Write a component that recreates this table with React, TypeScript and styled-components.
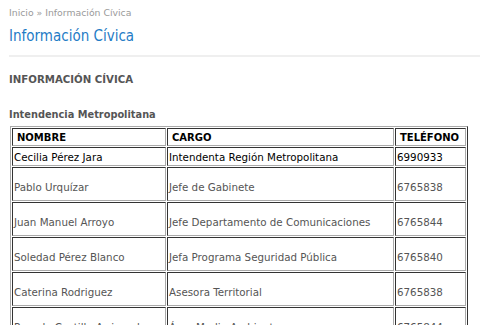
import styled, { createGlobalStyle } from "styled-components";

const GlobalStyle = createGlobalStyle`
  html, body {
    margin: 0;
    padding: 0;
    background: #fff;
    overflow: hidden;
  }
  body {
    font-family: "DejaVu Sans", Verdana, sans-serif;
  }
`;

type Person = { nombre: string; cargo: string; telefono: string };

const personas: Person[] = [
  { nombre: "Cecilia Pérez Jara", cargo: "Intendenta Región Metropolitana", telefono: "6990933" },
  { nombre: "Pablo Urquízar", cargo: "Jefe de Gabinete", telefono: "6765838" },
  { nombre: "Juan Manuel Arroyo", cargo: "Jefe Departamento de Comunicaciones", telefono: "6765844" },
  { nombre: "Soledad Pérez Blanco", cargo: "Jefa Programa Seguridad Pública", telefono: "6765840" },
  { nombre: "Caterina Rodriguez", cargo: "Asesora Territorial", telefono: "6765838" },
  { nombre: "Pamela Castillo Arriagada", cargo: "Área Medio Ambiente", telefono: "6765844" },
];

export default function App() {
  return (
    <>
      <GlobalStyle />
      <Page>
        <Breadcrumb>
          <a>Inicio</a> » Información Cívica
        </Breadcrumb>
        <Title>Información Cívica</Title>
        <Rule />
        <SectionTitle>INFORMACIÓN CÍVICA</SectionTitle>
        <SubTitle>Intendencia Metropolitana</SubTitle>
        <Table>
          <colgroup>
            <col style={{ width: 154 }} />
            <col style={{ width: 227 }} />
            <col style={{ width: 71 }} />
          </colgroup>
          <thead>
            <tr>
              <HeadCell>NOMBRE</HeadCell>
              <HeadCell>CARGO</HeadCell>
              <HeadCell>TELÉFONO</HeadCell>
            </tr>
          </thead>
          <tbody>
            {personas.map((p, i) => (
              <tr key={p.nombre}>
                <Cell $first={i === 0}>{p.nombre}</Cell>
                <Cell $first={i === 0}>{p.cargo}</Cell>
                <Cell $first={i === 0}>{p.telefono}</Cell>
              </tr>
            ))}
          </tbody>
        </Table>
      </Page>
    </>
  );
}

const Page = styled.div`
  width: 480px;
  height: 325px;
  overflow: hidden;
  padding: 7px 0 0 9px;
  box-sizing: border-box;
`;

const Breadcrumb = styled.div`
  font-size: 9.3px;
  line-height: 12px;
  color: #9a9a9a;

  a {
    color: #9a9a9a;
  }
`;

const Title = styled.h1`
  margin: 7px 0 0;
  font-family: "DejaVu Sans Condensed", "DejaVu Sans", sans-serif;
  font-weight: normal;
  font-size: 15px;
  line-height: 20px;
  color: #1f7cc6;
`;

const Rule = styled.div`
  height: 2px;
  background: #efefef;
  margin-top: 9px;
`;

const SectionTitle = styled.h2`
  margin: 16px 0 0;
  font-size: 10.2px;
  line-height: 14px;
  font-weight: bold;
  color: #555;
`;

const SubTitle = styled.h3`
  margin: 21px 0 0;
  font-size: 9.8px;
  line-height: 14px;
  font-weight: bold;
  color: #555;
`;

const Table = styled.table`
  margin: 4px 0 0 1px;
  width: 458px;
  table-layout: fixed;
  border-collapse: separate;
  border-spacing: 1px;
  border: 1px solid;
  border-color: #aaa #333 #333 #aaa;
  font-size: 10.3px;
`;

const HeadCell = styled.th`
  text-align: left;
  height: 16px;
  padding: 0 4px;
  font-size: 10px;
  font-weight: bold;
  color: #000;
  border: 1px solid;
  border-color: #333 #aaa #aaa #333;
  white-space: nowrap;
`;

const Cell = styled.td<{ $first: boolean }>`
  height: ${(p) => (p.$first ? "17px" : "26px")};
  padding: ${(p) => (p.$first ? "0 1px" : "6px 1px 0")};
  color: ${(p) => (p.$first ? "#000" : "#555")};
  border: 1px solid;
  border-color: #333 #aaa #aaa #333;
  white-space: nowrap;
  overflow: hidden;
  vertical-align: middle;
`;
